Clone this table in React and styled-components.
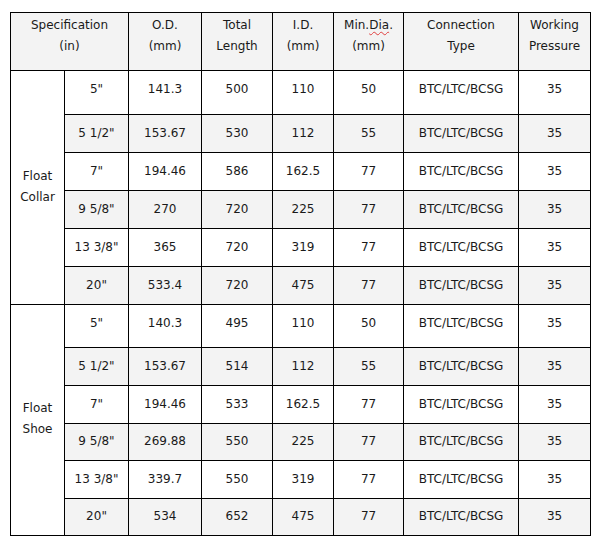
import React from 'react';
import styled, { createGlobalStyle } from 'styled-components';

const GlobalStyle = createGlobalStyle`
  body {
    margin: 0;
    background: #ffffff;
    font-family: "DejaVu Sans", Verdana, sans-serif;
    color: #1a1a1a;
  }
`;

const Page = styled.div`
  padding: 12px 0 0 10px;
`;

const Table = styled.table`
  border-collapse: collapse;
  table-layout: fixed;
  width: 581px;
  font-size: 12px;
`;

const HeadCell = styled.th`
  border: 1px solid #000;
  background: #f3f3f3;
  font-weight: normal;
  line-height: 21px;
  height: 46px;
  padding: 0 2px 11px;
  text-align: center;
  vertical-align: middle;
`;

const Row = styled.tr`
  height: ${(p) => p.$h}px;
  background: ${(p) => (p.$shade ? '#f3f3f3' : '#ffffff')};
`;

const Cell = styled.td`
  border: 1px solid #000;
  padding: 0 2px ${(p) => (p.$first ? 7 : 2)}px;
  text-align: center;
  vertical-align: middle;
  white-space: nowrap;
`;

const GroupCell = styled.td`
  border: 1px solid #000;
  background: #ffffff;
  text-align: center;
  vertical-align: middle;
  line-height: 21px;
  padding: 0 2px 2px;
`;

const Squiggle = styled.span`
  text-decoration: underline wavy #e04040;
  text-decoration-thickness: 1px;
  text-underline-offset: 2px;
`;

const widths = [54, 64, 73, 71, 61, 70, 115, 72];

const groups = [
  {
    name: ['Float', 'Collar'],
    heights: [44, 38, 38, 38, 38, 38],
    rows: [
      ['5"', '141.3', '500', '110', '50'],
      ['5 1/2"', '153.67', '530', '112', '55'],
      ['7"', '194.46', '586', '162.5', '77'],
      ['9 5/8"', '270', '720', '225', '77'],
      ['13 3/8"', '365', '720', '319', '77'],
      ['20"', '533.4', '720', '475', '77'],
    ],
  },
  {
    name: ['Float', 'Shoe'],
    heights: [43, 38, 38, 37, 38, 37],
    rows: [
      ['5"', '140.3', '495', '110', '50'],
      ['5 1/2"', '153.67', '514', '112', '55'],
      ['7"', '194.46', '533', '162.5', '77'],
      ['9 5/8"', '269.88', '550', '225', '77'],
      ['13 3/8"', '339.7', '550', '319', '77'],
      ['20"', '534', '652', '475', '77'],
    ],
  },
];

export default function App() {
  return (
    <>
      <GlobalStyle />
      <Page>
        <Table>
          <colgroup>
            {widths.map((w, i) => (
              <col key={i} style={{ width: w }} />
            ))}
          </colgroup>
          <thead>
            <tr>
              <HeadCell colSpan={2}>Specification<br />(in)</HeadCell>
              <HeadCell>O.D.<br />(mm)</HeadCell>
              <HeadCell>Total<br />Length</HeadCell>
              <HeadCell>I.D.<br />(mm)</HeadCell>
              <HeadCell>Min.<Squiggle>Dia</Squiggle>.<br />(mm)</HeadCell>
              <HeadCell>Connection<br />Type</HeadCell>
              <HeadCell>Working<br />Pressure</HeadCell>
            </tr>
          </thead>
          <tbody>
            {groups.map((g) =>
              g.rows.map((r, i) => (
                <Row key={g.name[1] + i} $h={g.heights[i]} $shade={i % 2 === 1}>
                  {i === 0 && (
                    <GroupCell rowSpan={g.rows.length}>
                      {g.name[0]}<br />{g.name[1]}
                    </GroupCell>
                  )}
                  {r.map((v, j) => (
                    <Cell key={j} $first={i === 0}>{v}</Cell>
                  ))}
                  <Cell $first={i === 0}>BTC/LTC/BCSG</Cell>
                  <Cell $first={i === 0}>35</Cell>
                </Row>
              ))
            )}
          </tbody>
        </Table>
      </Page>
    </>
  );
}
